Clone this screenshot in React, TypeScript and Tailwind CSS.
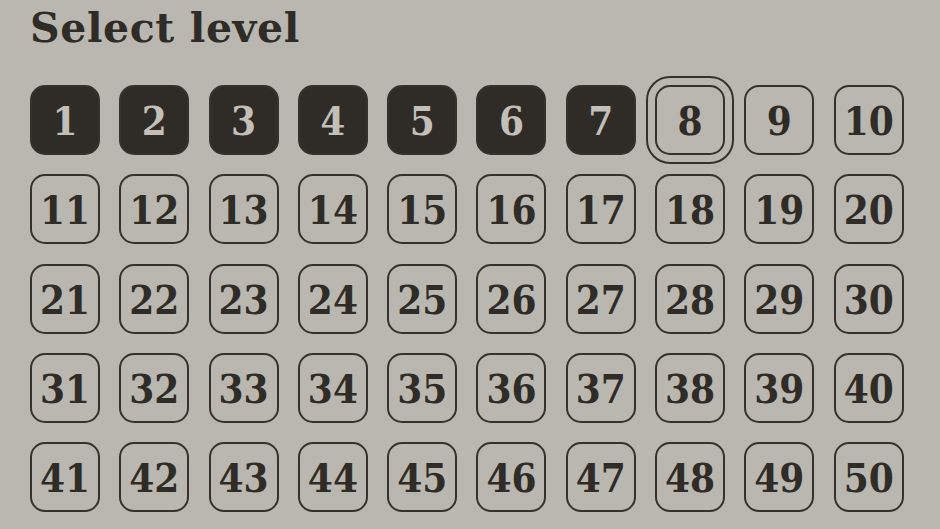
const levels = Array.from({ length: 50 }, (_, i) => i + 1);
const completed = 7;
const current = 8;

function LevelButton({ n }: { n: number }) {
  const done = n <= completed;
  const selected = n === current;
  return (
    <button
      className={`flex h-[70px] w-[70px] items-center justify-center rounded-[15px] border-2 border-[#35322c] text-[40px] font-bold leading-none ${
        done ? 'bg-[#2f2c27] text-[#c2bfb8]' : 'bg-transparent text-[#2f2c27]'
      } ${selected ? 'outline-2 outline-offset-[7px] outline-[#35322c]' : ''}`}
      style={{ fontFamily: "'DejaVu Serif Condensed', 'DejaVu Serif', serif", fontStretch: 'condensed' }}
    >
      <span className="pt-[2px]">{n}</span>
    </button>
  );
}

export default function App() {
  return (
    <div className="h-[529px] w-[940px] overflow-hidden bg-[#bab7b0] pl-[30px] pt-[4px]">
      <h1
        className="text-[41px] font-bold leading-[48px] tracking-[0.6px] text-[#2f2c27]"
        style={{ fontFamily: "'DejaVu Serif', serif" }}
      >
        Select level
      </h1>
      <div className="mt-[33px] grid w-fit grid-cols-10 gap-x-[19.3px] gap-y-[19.3px]">
        {levels.map(n => (
          <LevelButton key={n} n={n} />
        ))}
      </div>
    </div>
  );
}
